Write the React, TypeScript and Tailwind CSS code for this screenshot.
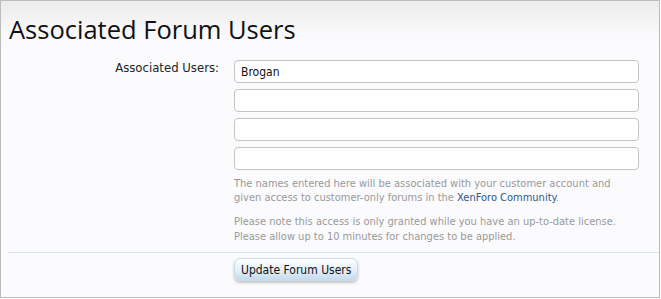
export default function App() {
  const fields = ['Brogan', '', '', '']
  return (
    <div className="h-[299px] w-[661px] bg-white">
      <div
        className="h-[298px] w-[660px] border border-[#bcbcbc] bg-[linear-gradient(to_bottom,#ececec_0px,#f8f8fa_30px,#fbfbfd_45px)] text-[11px] text-[#333]"
        style={{ fontFamily: '"DejaVu Sans Condensed", "Liberation Sans", sans-serif' }}
      >
        <h1
          className="pl-[8px] pt-[12px] text-[25.5px] leading-[32px] text-[#111]"
          style={{ fontFamily: '"Open Sans", "Liberation Sans", sans-serif' }}
        >
          Associated Forum Users
        </h1>
        <div className="mt-[15px] flex">
          <div className="-mt-[2px] w-[226px] pr-[8px] text-right text-[13px] text-[#222]">Associated Users:</div>
          <div className="flex-1 pl-[7px] pr-[20px]">
            <div className="flex flex-col gap-[6px]">
              {fields.map((v, i) => (
                <input
                  key={i}
                  defaultValue={v}
                  className="h-[23px] w-full rounded-[4px] border border-[#c4c4c4] bg-white px-[6px] text-[12px] text-[#111] outline-none"
                />
              ))}
            </div>
            <p className="mt-[7px] max-w-[392px] leading-[14px] text-[#999]">
              The names entered here will be associated with your customer account and given access to customer-only
              forums in the <a className="text-[#2b5a8a]">XenForo Community</a>.
            </p>
            <p className="mt-[9px] max-w-[392px] leading-[15px] text-[#999]">
              Please note this access is only granted while you have an up-to-date license. Please allow up to 10
              minutes for changes to be applied.
            </p>
          </div>
        </div>
        <div className="ml-[7px] mt-[8px] border-t border-[#d7e8f4]" />
        <div className="pl-[233px] pt-[5px]">
          <button className="h-[23px] rounded-[6px] border border-[#c9dbe9] bg-[linear-gradient(to_bottom,#ffffff,#dfecf7_60%,#c4dbef)] px-[6px] text-[12px] text-[#111] shadow-[0_2px_3px_rgba(0,0,0,0.22)]">
            Update Forum Users
          </button>
        </div>
      </div>
    </div>
  )
}
